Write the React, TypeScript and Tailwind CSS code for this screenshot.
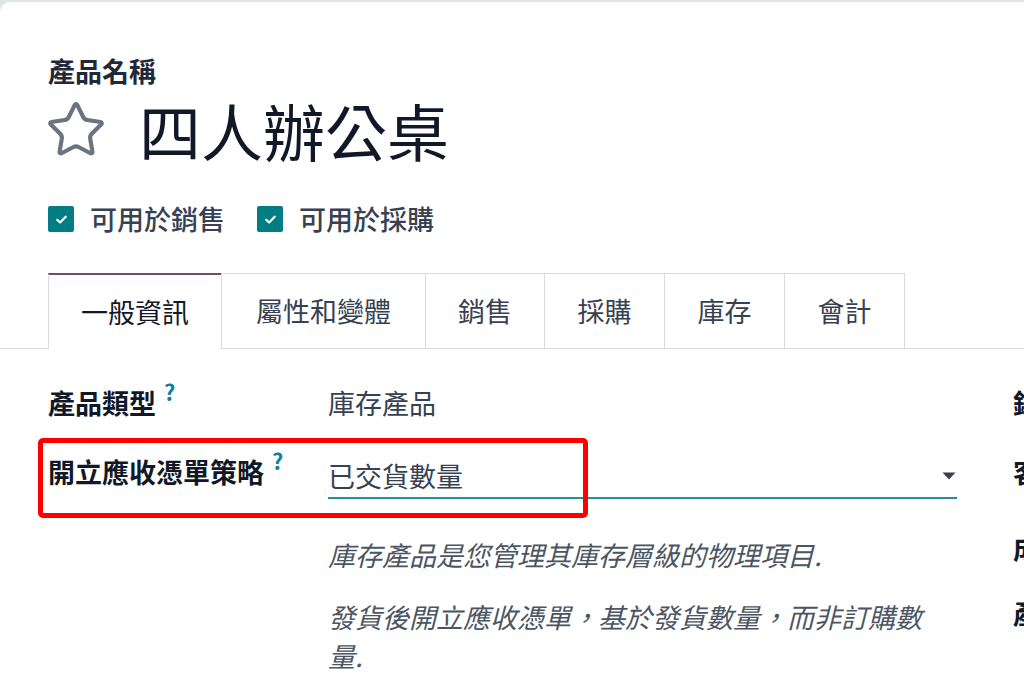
import { Star } from 'lucide-react';

const tabs = [
    { label: '一般資訊', w: 'w-[174px]', active: true },
    { label: '屬性和變體', w: 'w-[205px]' },
    { label: '銷售', w: 'w-[120px]' },
    { label: '採購', w: 'w-[121px]' },
    { label: '庫存', w: 'w-[121px]' },
    { label: '會計', w: 'w-[121px]' },
];

function CheckBox({ label }: { label: string }) {
    return (
        <label className="flex items-center gap-4">
            <span className="flex h-[26px] w-[26px] items-center justify-center rounded-[2px] bg-[#017e84]">
                <svg viewBox="0 0 16 16" className="h-[15px] w-[15px]">
                    <path d="M3.5 8.4l3 2.8 6-6.2" fill="none" stroke="white" strokeWidth="2.4" strokeLinecap="round" strokeLinejoin="round" />
                </svg>
            </span>
            <span className="font-medium text-[#374151]">{label}</span>
        </label>
    );
}

function Help() {
    return <sup className="ml-2 -top-[13px] text-[22px] font-semibold text-[#0e7fa0]">?</sup>;
}

export default function App() {
    return (
        <div className="relative h-[678px] w-[1024px] overflow-hidden bg-[#dfe2e6] font-['Noto_Sans_CJK_TC','Noto_Sans',sans-serif] text-[27px]">
            <div className="mt-[2px] h-[676px] rounded-tl-[10px] bg-white">
                {/* header */}
                <div className="pl-12 pt-[51px]">
                    <div className="font-bold leading-[36px] text-[#1f2937]">產品名稱</div>
                    <div className="mt-[6px] flex h-[70px] items-center">
                        <Star size={62} strokeWidth={1.6} className="-ml-[3px] text-[#6b7280]" />
                        <h1 className="ml-[32px] text-[62px] leading-[70px] text-[#111827]">四人辦公桌</h1>
                    </div>
                    <div className="mt-[36px] flex h-[36px] items-center gap-8">
                        <CheckBox label="可用於銷售" />
                        <CheckBox label="可用於採購" />
                    </div>
                </div>

                {/* tabs */}
                <div className="mt-[36px] flex border-b border-[#d8dadd] pl-12">
                    {tabs.map((t) => (
                        <div
                            key={t.label}
                            className={
                                t.active
                                    ? `${t.w} -mb-px flex h-[76px] items-center justify-center border-x border-t-2 border-[#d8dadd] border-t-[#714b67] bg-white text-[#111827]`
                                    : `${t.w} -ml-px flex h-[75px] items-center justify-center border border-b-0 border-[#d8dadd] text-[#374151]`
                            }
                        >
                            {t.label}
                        </div>
                    ))}
                </div>

                {/* form */}
                <div className="flex pl-12 pt-[36px]">
                    <div className="grid w-[909px] grid-cols-[280px_629px] leading-[36px]">
                        <div className="font-bold text-[#111827]">
                            產品類型
                            <Help />
                        </div>
                        <div className="text-[#374151]">庫存產品</div>

                        <div className="mt-[33px] font-bold text-[#111827]">
                            開立應收憑單策略
                            <Help />
                        </div>
                        <div className="mt-[37px] flex items-center justify-between border-b-2 border-[#2a8f94] pb-[3px] text-[#374151]">
                            <span>已交貨數量</span>
                            <svg viewBox="0 0 14 8" className="mr-[1px] h-[8px] w-[14px]">
                                <path d="M0.5 0.5h13L7 7.5z" fill="#374151" />
                            </svg>
                        </div>

                        <div />
                        <div className="mt-[36px] w-[615px] italic leading-[39px] text-[#4b5563]">
                            <p>庫存產品是您管理其庫存層級的物理項目.</p>
                            <p className="mt-[23px]">發貨後開立應收憑單，基於發貨數量，而非訂購數量.</p>
                        </div>
                    </div>

                    <div className="ml-[56px] flex flex-col whitespace-nowrap font-bold leading-[36px] text-[#111827]">
                        <div>銷售價格</div>
                        <div className="mt-[33px]">客戶稅項</div>
                        <div className="mt-[40px]">成本</div>
                        <div className="mt-[29px]">產品類別</div>
                    </div>
                </div>
            </div>

            {/* annotation */}
            <div className="pointer-events-none absolute left-[38px] top-[438px] h-[80px] w-[550px] rounded-[5px] border-[5px] border-[#ff0000]" />
        </div>
    );
}
